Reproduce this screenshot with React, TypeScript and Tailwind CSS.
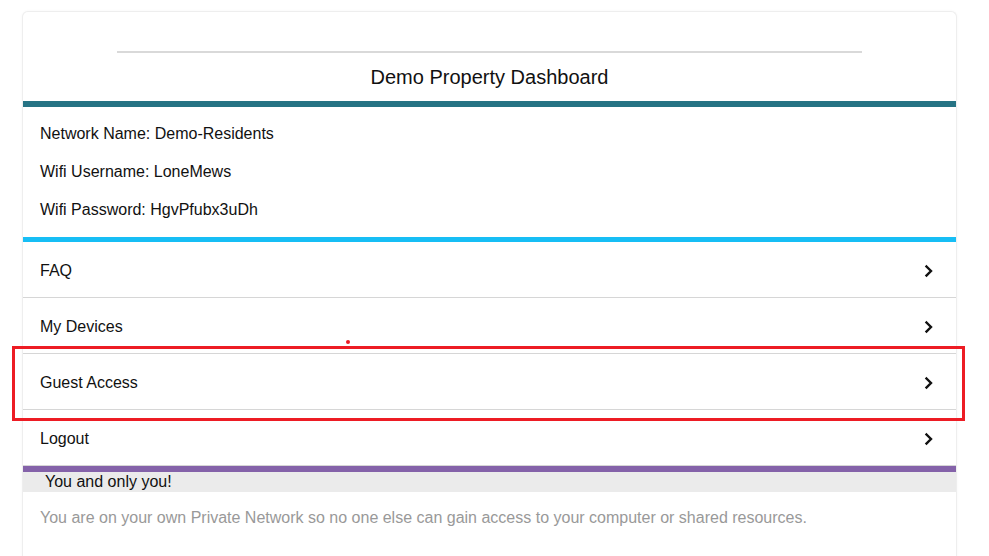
import React from 'react';

const rows = ['FAQ', 'My Devices', 'Guest Access', 'Logout'];

function Chevron() {
  return (
    <svg width="10" height="14" viewBox="0 0 10 14" fill="none" className="shrink-0">
      <path d="M2.5 2.5 L7 7 L2.5 11.5" stroke="#111" strokeWidth="2.4" strokeLinecap="square" />
    </svg>
  );
}

export default function App() {
  return (
    <div className="relative min-h-[556px] bg-white pt-[11px] font-['Liberation_Sans',Arial,sans-serif] text-[16px] text-[#111]">
      <div className="ml-[22px] w-[935px] rounded-t-[6px] border border-b-0 border-[#eeeeee] bg-white shadow-[0_0_3px_rgba(0,0,0,0.04)]">
        <div className="flex h-[89px] flex-col items-center">
          <div className="mt-[39px] h-[2px] w-[745px] bg-[#d9d9d9]" />
          <h1 className="mt-[12px] text-[20px] leading-[24px] text-[#111]">Demo Property Dashboard</h1>
        </div>
        <div className="h-[6px] bg-[#267384]" />

        <div className="flex h-[130px] flex-col gap-[20px] px-[17px] pt-[18px] leading-[18px]">
          <p>Network Name: Demo-Residents</p>
          <p>Wifi Username: LoneMews</p>
          <p>Wifi Password: HgvPfubx3uDh</p>
        </div>
        <div className="h-[5px] bg-[#17bef5]" />

        <div className="flex flex-col">
          {rows.map((r) => (
            <div
              key={r}
              className="flex h-[56px] items-center justify-between border-b border-[#d6d6d6] pt-[2px] pl-[17px] pr-[22px]">
              <span>{r}</span>
              <Chevron />
            </div>
          ))}
        </div>
        <div className="h-[6px] bg-[#8462a9]" />
        <div className="flex h-[20px] items-center bg-[#ebebeb] pl-[22px] leading-[18px]">You and only you!</div>
        <p className="px-[17px] pt-[17px] pb-[30px] leading-[18px] text-[#999999]">
          You are on your own Private Network so no one else can gain access to your computer or shared resources.
        </p>
      </div>

      <div className="pointer-events-none absolute left-[12px] top-[346px] h-[75px] w-[953px] border-[3px] border-[#ed1c24]" />
      <div className="pointer-events-none absolute left-[346px] top-[340px] h-[4px] w-[4px] rounded-full bg-[#ed1c24]" />
    </div>
  );
}
